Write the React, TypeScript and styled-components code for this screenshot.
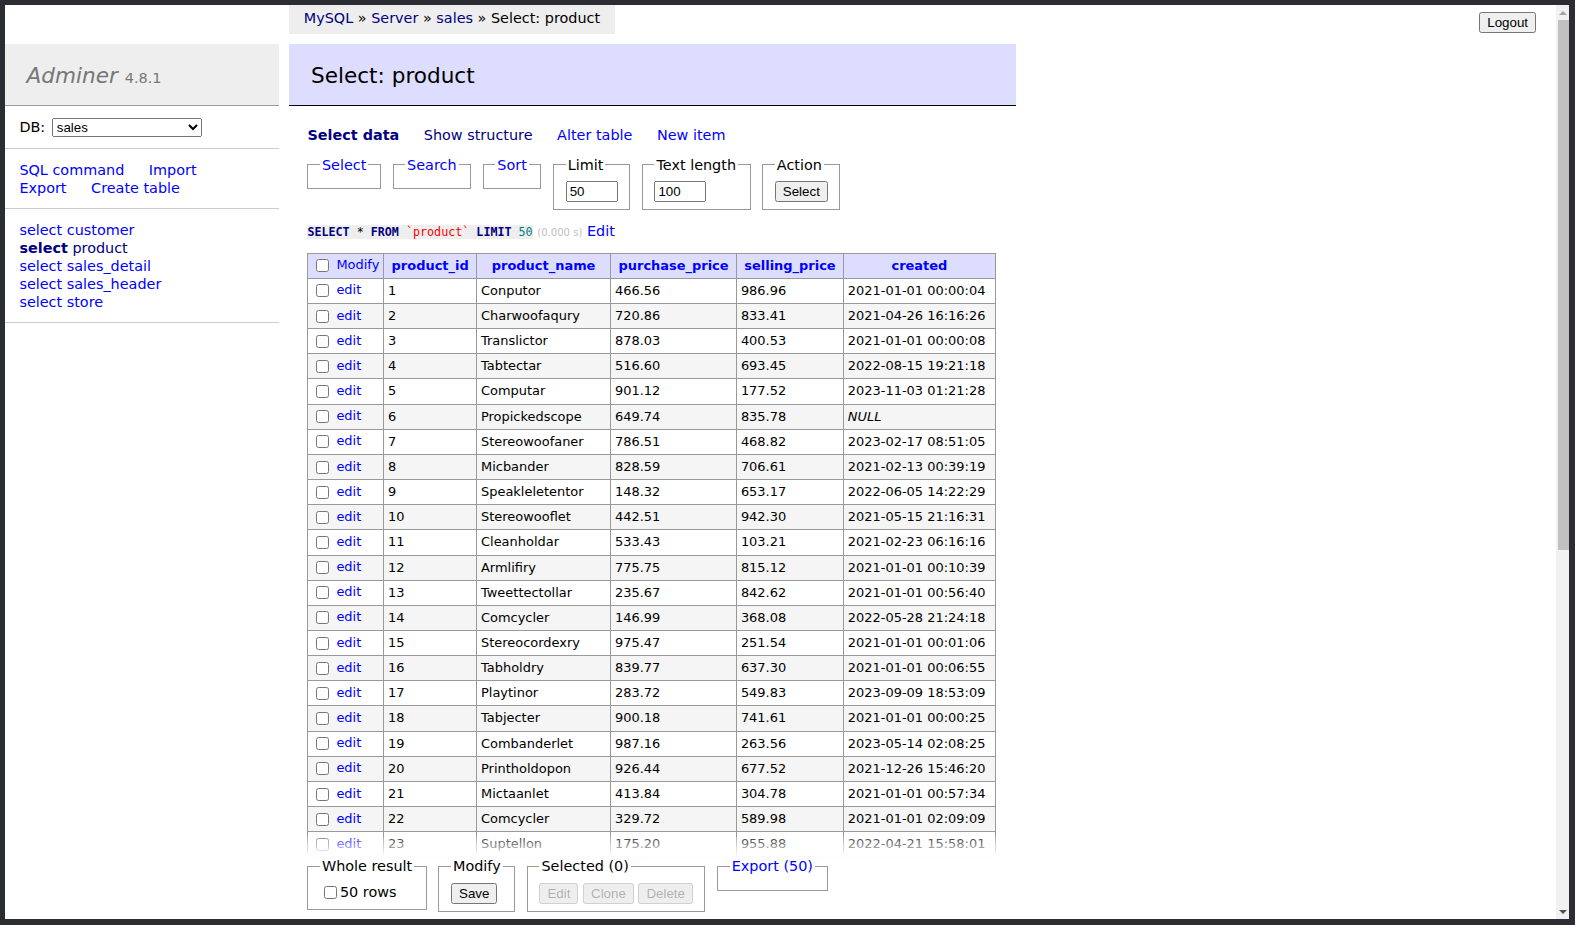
import React from 'react';
import styled, { createGlobalStyle } from 'styled-components';

type Product = {
  id: number;
  name: string;
  purchase: string;
  selling: string;
  created: string | null;
};

const products: Product[] = [
  { id: 1, name: 'Conputor', purchase: '466.56', selling: '986.96', created: '2021-01-01 00:00:04' },
  { id: 2, name: 'Charwoofaqury', purchase: '720.86', selling: '833.41', created: '2021-04-26 16:16:26' },
  { id: 3, name: 'Translictor', purchase: '878.03', selling: '400.53', created: '2021-01-01 00:00:08' },
  { id: 4, name: 'Tabtectar', purchase: '516.60', selling: '693.45', created: '2022-08-15 19:21:18' },
  { id: 5, name: 'Computar', purchase: '901.12', selling: '177.52', created: '2023-11-03 01:21:28' },
  { id: 6, name: 'Propickedscope', purchase: '649.74', selling: '835.78', created: null },
  { id: 7, name: 'Stereowoofaner', purchase: '786.51', selling: '468.82', created: '2023-02-17 08:51:05' },
  { id: 8, name: 'Micbander', purchase: '828.59', selling: '706.61', created: '2021-02-13 00:39:19' },
  { id: 9, name: 'Speakleletentor', purchase: '148.32', selling: '653.17', created: '2022-06-05 14:22:29' },
  { id: 10, name: 'Stereowooflet', purchase: '442.51', selling: '942.30', created: '2021-05-15 21:16:31' },
  { id: 11, name: 'Cleanholdar', purchase: '533.43', selling: '103.21', created: '2021-02-23 06:16:16' },
  { id: 12, name: 'Armlifiry', purchase: '775.75', selling: '815.12', created: '2021-01-01 00:10:39' },
  { id: 13, name: 'Tweettectollar', purchase: '235.67', selling: '842.62', created: '2021-01-01 00:56:40' },
  { id: 14, name: 'Comcycler', purchase: '146.99', selling: '368.08', created: '2022-05-28 21:24:18' },
  { id: 15, name: 'Stereocordexry', purchase: '975.47', selling: '251.54', created: '2021-01-01 00:01:06' },
  { id: 16, name: 'Tabholdry', purchase: '839.77', selling: '637.30', created: '2021-01-01 00:06:55' },
  { id: 17, name: 'Playtinor', purchase: '283.72', selling: '549.83', created: '2023-09-09 18:53:09' },
  { id: 18, name: 'Tabjecter', purchase: '900.18', selling: '741.61', created: '2021-01-01 00:00:25' },
  { id: 19, name: 'Combanderlet', purchase: '987.16', selling: '263.56', created: '2023-05-14 02:08:25' },
  { id: 20, name: 'Printholdopon', purchase: '926.44', selling: '677.52', created: '2021-12-26 15:46:20' },
  { id: 21, name: 'Mictaanlet', purchase: '413.84', selling: '304.78', created: '2021-01-01 00:57:34' },
  { id: 22, name: 'Comcycler', purchase: '329.72', selling: '589.98', created: '2021-01-01 02:09:09' },
  { id: 23, name: 'Suptellon', purchase: '175.20', selling: '955.88', created: '2022-04-21 15:58:01' },
  { id: 24, name: 'Tabcordlet', purchase: '612.40', selling: '288.15', created: '2021-01-01 00:03:12' },
  { id: 25, name: 'Speakholdry', purchase: '354.09', selling: '720.44', created: '2022-11-30 09:12:47' },
];

// widths are content widths of the header cells, tuned to the reference columns
const columns = [
  { name: 'product_id', width: 79 },
  { name: 'product_name', width: 120 },
  { name: 'purchase_price', width: 112 },
  { name: 'selling_price', width: 93 },
  { name: 'created', width: 138 },
];

const GlobalStyle = createGlobalStyle`
  html, body {
    margin: 0;
    padding: 0;
    background: #2b2d33;
  }
`;

const Frame = styled.div`
  box-sizing: border-box;
  width: 1575px;
  height: 925px;
  padding: 5px 6px 6px 5px;
  background: #2b2d33;
  display: flex;
`;

const Viewport = styled.div`
  flex: 1;
  min-width: 0;
  display: flex;
  background: #fff;
`;

const Page = styled.div`
  flex: 1;
  min-width: 0;
  display: flex;
  flex-direction: column;
  overflow: hidden;
  color: #000;
  font: 14.4px/1.25 Verdana, 'DejaVu Sans', sans-serif;
`;

const TopBar = styled.div`
  flex: none;
  display: flex;
  align-items: flex-start;
  height: 2em;
  padding-left: calc(21em - 18px);
`;

const Breadcrumb = styled.p`
  margin: 0;
  height: 2em;
  padding: 0 1em;
  line-height: 1.9em;
  white-space: nowrap;
  background: #eee;
`;

const LogoutBox = styled.p`
  margin: 0.5em 20px 0 auto;
`;

const Link = styled.a<{ $visited?: boolean; $active?: boolean }>`
  color: ${(p) => (p.$visited ? 'navy' : 'blue')};
  font-weight: ${(p) => (p.$active ? 'bold' : 'inherit')};
  text-decoration: none;
  cursor: pointer;
`;

const Button = styled.button`
  font-family: Arial, 'Liberation Sans', sans-serif;
  font-size: 13.333px;
  vertical-align: middle;
`;

const Control = styled.input`
  font-family: Arial, 'Liberation Sans', sans-serif;
  vertical-align: middle;
`;

const SizeInput = styled(Control)`
  width: 44px;
`;

const DbSelect = styled.select`
  width: 150px;
  margin-left: 2px;
  font-family: Arial, 'Liberation Sans', sans-serif;
  font-size: 13.333px;
`;

const Main = styled.div`
  flex: 1;
  min-height: 0;
  display: flex;
  gap: 2em;
  padding-top: 10px;
`;

const Menu = styled.div`
  flex: none;
  align-self: flex-start;
  width: 19em;
`;

const Logo = styled.h1`
  margin: 0;
  padding: calc(0.8em + 2px) 1em calc(0.8em - 2px);
  font-size: 150%;
  font-weight: normal;
  color: #777;
  background: #eee;
  border-bottom: 1px solid #999;
`;

const LogoLink = styled.a`
  color: #777;
  font-style: italic;
  text-decoration: none;
`;

const Version = styled.span`
  color: #777;
  font-size: 67%;
`;

const MenuBlock = styled.div`
  margin: 0;
  padding: 0.8em 1em;
  border-bottom: 1px solid #ccc;
`;

const MenuLinks = styled(MenuBlock)`
  a {
    margin-right: 20px;
    white-space: nowrap;
  }
`;

const TableList = styled.ul`
  margin: 0;
  padding: 0.8em 1em;
  border-bottom: 1px solid #ccc;
  white-space: nowrap;
  list-style: none;
`;

const Content = styled.div`
  flex: none;
  display: flex;
  flex-direction: column;
  min-height: 0;
  padding-right: 20px;
`;

const Top = styled.div`
  flex: none;
`;

const Title = styled.h2`
  margin: 0 0 20px -18px;
  padding: calc(0.8em + 2px) 1em calc(0.8em - 2px);
  font-size: 150%;
  font-weight: normal;
  color: #000;
  background: #ddf;
  border-bottom: 1px solid #000;
`;

const Links = styled.p`
  margin: 0.8em 20px 0 0;

  a {
    margin-right: 20px;
    white-space: nowrap;
  }
`;

const Form = styled.form`
  margin: 0;
`;

const Fieldset = styled.fieldset<{ $flush?: boolean }>`
  display: inline-block;
  vertical-align: top;
  margin: ${(p) => (p.$flush ? '0' : '0.8em')} 0.5em 0 0;
  padding: 0.5em 0.8em;
  border: 1px solid #999;
  min-inline-size: min-content;
`;

const Legend = styled.legend`
  padding: 0 2px;
`;

const Query = styled.p`
  margin: 0.8em 20px 0 0;
`;

const Code = styled.code`
  font: 11.7px/1.25 'DejaVu Sans Mono', 'Liberation Mono', monospace;
  background: #eee;
`;

const Keyword = styled.span`
  color: navy;
  font-weight: bold;
`;

const Quoted = styled.span`
  color: red;
`;

const Num = styled.span`
  color: #007f7f;
`;

const Time = styled.span`
  color: silver;
  font-size: 70%;
`;

const TableArea = styled.div`
  flex: 1;
  min-height: 0;
  overflow: hidden;
`;

const DataTable = styled.table`
  margin: 1em 20px 0 0;
  border-collapse: collapse;
  font-size: 90%;
  white-space: pre;
`;

const HeadRow = styled.tr`
  background: #ddf;
`;

const HeadCheckCell = styled.td`
  width: 67px;
  padding: 0.2em 0.3em;
  border: 1px solid #999;
`;

const HeadCell = styled.th<{ $width: number }>`
  width: ${(p) => p.$width}px;
  padding: 0.2em 0.5em;
  border: 1px solid #999;
  text-align: center;
  font-weight: bold;
`;

const BodyRow = styled.tr<{ $odd: boolean }>`
  background: ${(p) => (p.$odd ? '#f5f5f5' : '#fff')};
`;

const Cell = styled.td`
  padding: 0.2em 0.3em;
  border: 1px solid #999;
`;

const Footer = styled.div`
  position: relative;
  flex: none;
  margin: -20px -20px 0 0;
  border-top: 20px solid rgba(255, 255, 255, 0.7);
  border-image: linear-gradient(rgba(255, 255, 255, 0.2), #fff) 100% 0;
`;

const FooterInner = styled.div`
  padding: 0 0 0.5em;
  background: #fff;
`;

const Scrollbar = styled.div`
  flex: none;
  width: 13px;
  display: flex;
  flex-direction: column;
  background: #f1f1f1;
`;

const ScrollButton = styled.div`
  flex: none;
  height: 15px;
  display: flex;
  align-items: center;
  justify-content: center;
`;

const Arrow = styled.div<{ $down?: boolean }>`
  width: 0;
  height: 0;
  border-left: 4px solid transparent;
  border-right: 4px solid transparent;
  ${(p) => (p.$down ? 'border-top: 4px solid #505050;' : 'border-bottom: 4px solid #a3a3a3;')}
`;

const Thumb = styled.div`
  flex: none;
  height: 530px;
  margin-left: 2px;
  background: #c1c1c1;
`;

const Track = styled.div`
  flex: 1;
`;

const tables = ['customer', 'product', 'sales_detail', 'sales_header', 'store'];

const App = () => {
  return (
    <>
      <GlobalStyle />
      <Frame>
        <Viewport>
          <Page>
            <TopBar>
              <Breadcrumb>
                <Link $visited>MySQL</Link> » <Link $visited>Server</Link> » <Link $visited>sales</Link> » Select:
                product
              </Breadcrumb>
              <LogoutBox>
                <Button type="button">Logout</Button>
              </LogoutBox>
            </TopBar>

            <Main>
              <Menu>
                <Logo>
                  <LogoLink>Adminer</LogoLink> <Version>4.8.1</Version>
                </Logo>
                <MenuBlock>
                  DB:{' '}
                  <DbSelect defaultValue="sales">
                    <option value="">(database)</option>
                    <option value="information_schema">information_schema</option>
                    <option value="sales">sales</option>
                  </DbSelect>
                </MenuBlock>
                <MenuLinks>
                  <Link>SQL command</Link> <Link>Import</Link> <Link>Export</Link> <Link>Create table</Link>
                </MenuLinks>
                <TableList>
                  {tables.map((t) => (
                    <li key={t}>
                      <Link $active={t === 'product'} $visited={t === 'product'}>
                        select
                      </Link>{' '}
                      <Link $visited={t === 'product'}>{t}</Link>
                    </li>
                  ))}
                </TableList>
              </Menu>

              <Content>
                <Top>
                  <Title>Select: product</Title>
                  <Links>
                    <Link $active $visited>
                      Select data
                    </Link>{' '}
                    <Link $visited>Show structure</Link> <Link>Alter table</Link> <Link>New item</Link>
                  </Links>
                  <Form>
                    <Fieldset>
                      <Legend>
                        <Link>Select</Link>
                      </Legend>
                    </Fieldset>{' '}
                    <Fieldset>
                      <Legend>
                        <Link>Search</Link>
                      </Legend>
                    </Fieldset>{' '}
                    <Fieldset>
                      <Legend>
                        <Link>Sort</Link>
                      </Legend>
                    </Fieldset>{' '}
                    <Fieldset>
                      <Legend>Limit</Legend>
                      <SizeInput type="text" defaultValue="50" />
                    </Fieldset>{' '}
                    <Fieldset>
                      <Legend>Text length</Legend>
                      <SizeInput type="text" defaultValue="100" />
                    </Fieldset>{' '}
                    <Fieldset>
                      <Legend>Action</Legend>
                      <Button type="button">Select</Button>
                    </Fieldset>
                  </Form>
                  <Query>
                    <Code>
                      <Keyword>SELECT</Keyword> * <Keyword>FROM</Keyword> <Quoted>`product`</Quoted>{' '}
                      <Keyword>LIMIT</Keyword> <Num>50</Num>
                    </Code>{' '}
                    <Time>(0.000 s)</Time> <Link>Edit</Link>
                  </Query>
                </Top>

                <TableArea>
                  <DataTable>
                    <thead>
                      <HeadRow>
                        <HeadCheckCell>
                          <Control type="checkbox" /> <Link>Modify</Link>
                        </HeadCheckCell>
                        {columns.map((c) => (
                          <HeadCell key={c.name} $width={c.width}>
                            <Link>{c.name}</Link>
                          </HeadCell>
                        ))}
                      </HeadRow>
                    </thead>
                    <tbody>
                      {products.map((p, i) => (
                        <BodyRow key={p.id} $odd={i % 2 === 1}>
                          <Cell>
                            <Control type="checkbox" /> <Link>edit</Link>
                          </Cell>
                          <Cell>{p.id}</Cell>
                          <Cell>{p.name}</Cell>
                          <Cell>{p.purchase}</Cell>
                          <Cell>{p.selling}</Cell>
                          <Cell>{p.created ?? <i>NULL</i>}</Cell>
                        </BodyRow>
                      ))}
                    </tbody>
                  </DataTable>
                </TableArea>

                <Footer>
                  <FooterInner>
                    <Fieldset $flush>
                      <Legend>Whole result</Legend>
                      <label>
                        <Control type="checkbox" />
                        50 rows
                      </label>
                    </Fieldset>{' '}
                    <Fieldset $flush>
                      <Legend>Modify</Legend>
                      <Button type="button">Save</Button>
                    </Fieldset>{' '}
                    <Fieldset $flush>
                      <Legend>Selected (0)</Legend>
                      <Button type="button" disabled>
                        Edit
                      </Button>{' '}
                      <Button type="button" disabled>
                        Clone
                      </Button>{' '}
                      <Button type="button" disabled>
                        Delete
                      </Button>
                    </Fieldset>{' '}
                    <Fieldset $flush>
                      <Legend>
                        <Link>Export (50)</Link>
                      </Legend>
                    </Fieldset>
                  </FooterInner>
                </Footer>
              </Content>
            </Main>
          </Page>

          <Scrollbar>
            <ScrollButton>
              <Arrow />
            </ScrollButton>
            <Thumb />
            <Track />
            <ScrollButton>
              <Arrow $down />
            </ScrollButton>
          </Scrollbar>
        </Viewport>
      </Frame>
    </>
  );
};

export default App;
